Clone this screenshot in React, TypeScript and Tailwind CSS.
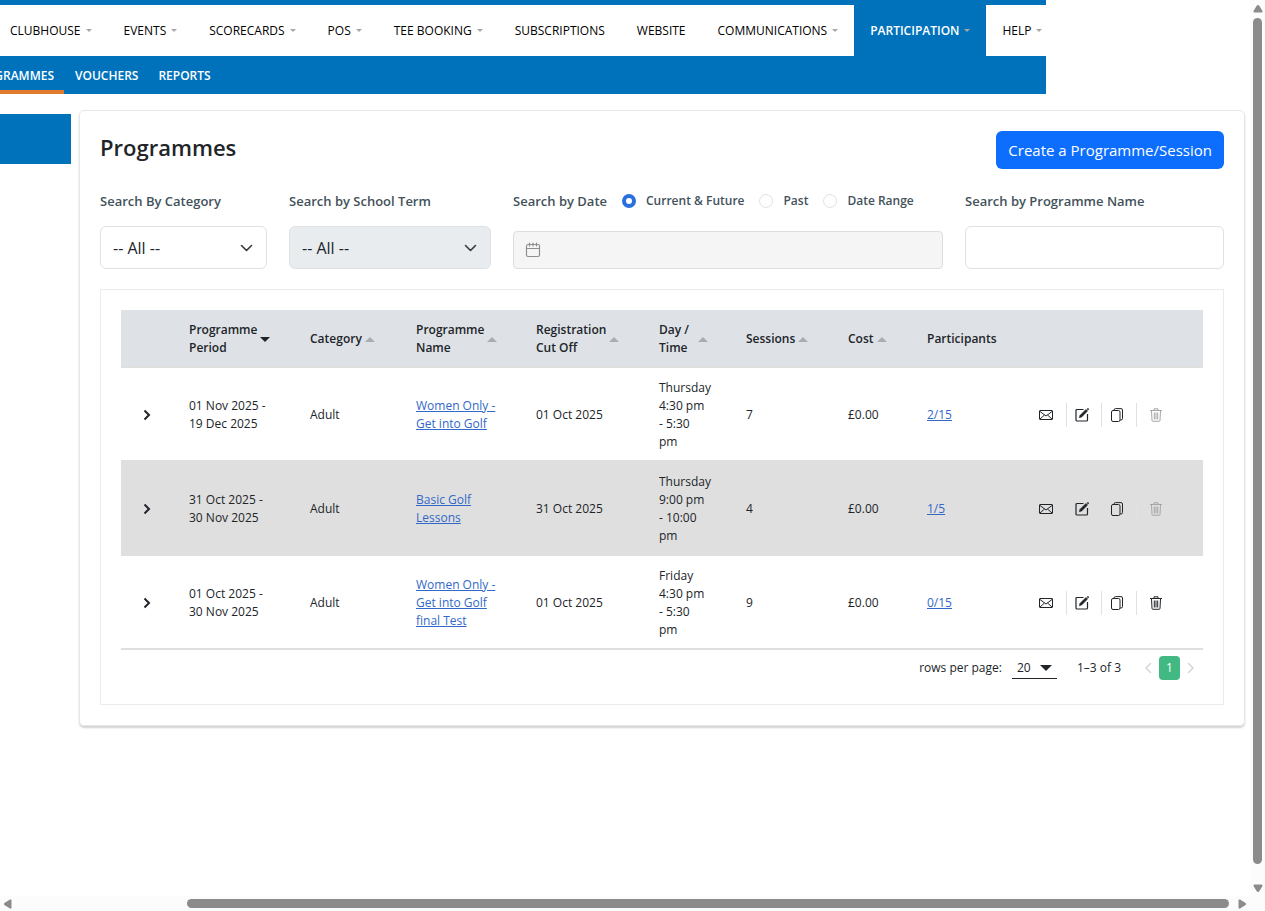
import { useState } from 'react';

const menu = [
  { label: 'CLUBHOUSE', caret: true },
  { label: 'EVENTS', caret: true },
  { label: 'SCORECARDS', caret: true },
  { label: 'POS', caret: true },
  { label: 'TEE BOOKING', caret: true },
  { label: 'SUBSCRIPTIONS', caret: false },
  { label: 'WEBSITE', caret: false },
  { label: 'COMMUNICATIONS', caret: true },
  { label: 'PARTICIPATION', caret: true, active: true },
  { label: 'HELP', caret: true }
];

const columns = [
  { label: 'Programme Period', width: 'w-[121px]', sort: 'desc' },
  { label: 'Category', width: 'w-[106px]', sort: 'none' },
  { label: 'Programme Name', width: 'w-[120px]', sort: 'none' },
  { label: 'Registration Cut\u00a0Off', width: 'w-[123px]', sort: 'none' },
  { label: 'Day\u00a0/ Time', width: 'w-[87px]', sort: 'none' },
  { label: 'Sessions', width: 'w-[102px]', sort: 'none' },
  { label: 'Cost', width: 'w-[79px]', sort: 'none' },
  { label: 'Participants', width: 'w-[110px]', sort: '' }
];

const programmes = [
  {
    period: '01 Nov 2025 - 19 Dec 2025',
    category: 'Adult',
    name: 'Women Only - Get into Golf',
    cutOff: '01 Oct 2025',
    day: 'Thursday',
    time: '4:30 pm - 5:30 pm',
    sessions: 7,
    cost: '£0.00',
    participants: '2/15',
    canDelete: false
  },
  {
    period: '31 Oct 2025 - 30 Nov 2025',
    category: 'Adult',
    name: 'Basic Golf Lessons',
    cutOff: '31 Oct 2025',
    day: 'Thursday',
    time: '9:00 pm - 10:00 pm',
    sessions: 4,
    cost: '£0.00',
    participants: '1/5',
    canDelete: false
  },
  {
    period: '01 Oct 2025 - 30 Nov 2025',
    category: 'Adult',
    name: 'Women Only - Get into Golf final Test',
    cutOff: '01 Oct 2025',
    day: 'Friday',
    time: '4:30 pm - 5:30 pm',
    sessions: 9,
    cost: '£0.00',
    participants: '0/15',
    canDelete: true
  }
];

const dateModes = ['Current & Future', 'Past', 'Date Range'];

function SelectChevron() {
  return (
    <svg viewBox="0 0 16 16" className="pointer-events-none absolute right-3 top-1/2 h-4 w-4 -translate-y-1/2" fill="none" stroke="#343a40" strokeWidth="1.6" strokeLinecap="round" strokeLinejoin="round">
      <path d="m2.500 5.500 5 5 5-5" />
    </svg>
  );
}

function MailIcon() {
  return (
    <svg viewBox="0 0 16 12" className="h-3 w-4" fill="none" stroke="currentColor" strokeLinejoin="round">
      <rect x="1.5" y="1.5" width="13" height="9" rx=".5" />
      <path d="M2 2.500 8 7l6-4.500M2 10l4.500-4M14 10 9.500 6" />
    </svg>
  );
}

function EditIcon() {
  return (
    <svg viewBox="0 0 14 14" className="h-3.5 w-3.5" fill="none" stroke="currentColor">
      <path d="M8.500 1.500H2A1 1 0 0 0 1 2.500V12a1 1 0 0 0 1 1h9.500a1 1 0 0 0 1-1V6" strokeWidth="1.200" />
      <path d="m4.300 9.700.8-2.400L11 1.400l1.600 1.600-5.900 5.900-2.400.8Z" fill="currentColor" strokeWidth=".6" />
      <path d="m12.400.4 1.200 1.200" strokeWidth="1.500" />
    </svg>
  );
}

function CopyIcon() {
  return (
    <svg viewBox="0 0 14 14" className="h-3.5 w-3.5" fill="none" stroke="currentColor">
      <rect x="1.500" y="2.500" width="8.500" height="11" rx="1.500" />
      <path d="M4 2.300V2A1.500 1.500 0 0 1 5.500.6H11A1.500 1.500 0 0 1 12.500 2v8.500A1.500 1.500 0 0 1 11 12h-.8" />
    </svg>
  );
}

function TrashIcon() {
  return (
    <svg viewBox="0 0 14 14" className="h-3.5 w-3.5" fill="none" stroke="currentColor">
      <path d="M1 2.500h12M5 2.300V.8h4v1.500" />
      <path d="M2.500 2.800 3 12.300a1 1 0 0 0 1 1h6a1 1 0 0 0 1-1l.5-9.500M5.300 4.500v7M7 4.500v7M8.700 4.500v7" />
    </svg>
  );
}

function CalendarIcon() {
  return (
    <svg viewBox="0 0 16 16" className="pointer-events-none absolute left-3 top-1/2 h-4 w-4 -translate-y-1/2" fill="none" stroke="#8f8f8f" strokeWidth="1.200" strokeLinecap="round">
      <rect x="1.500" y="2.500" width="13" height="12" rx="1.500" />
      <path d="M1.500 6.500h13M4.500 1v3M8 1v3M11.500 1v3" />
    </svg>
  );
}

function SortArrow({ sort }: { sort: string }) {
  if (sort === 'desc') {
    return (
      <svg viewBox="0 0 10 5" className="h-[5px] w-2.5 shrink-0" fill="#212529">
        <path d="M0 0h10L5 5Z" />
      </svg>
    );
  }
  return (
    <svg viewBox="0 0 10 5" className="h-[5px] w-2.5 shrink-0" fill="#a9adb1">
      <path d="M0 5h10L5 0Z" />
    </svg>
  );
}

export default function App() {
  const [category, setCategory] = useState('all');
  const [mode, setMode] = useState('Current & Future');
  const [search, setSearch] = useState('');

  return (
    <div className="grid h-screen grid-cols-[minmax(0,1fr)_15px] grid-rows-[minmax(0,1fr)_15px] overflow-hidden bg-white font-['Open_Sans','Noto_Sans',sans-serif] text-[12px] leading-[18px] text-[#212529]">
      <div className="overflow-hidden">
        {/* Header */}
        <header className="mr-[204px] border-t-[5px] border-[#0072bc]">
          <nav className="-ml-1.5 flex h-[51px]">
            {menu.map(item => (
              <button
                key={item.label}
                type="button"
                className={`flex shrink-0 items-center gap-[5px] whitespace-nowrap px-4 text-[12px] ${
                  item.active ? 'bg-[#0072bc] font-semibold text-white' : 'font-medium text-black'
                }`}
              >
                {item.label}
                {item.caret && (
                  <svg viewBox="0 0 6 3" className="h-[3px] w-1.5" fill="#a8a8a8">
                    <path d="M0 0h6L3 3Z" />
                  </svg>
                )}
              </button>
            ))}
          </nav>
          <nav className="flex h-[38px] bg-[#0072bc] text-[12px] font-semibold text-white">
            <div className="flex w-16 justify-end overflow-hidden border-b-4 border-[#e07b2e] pr-2.5">
              <a href="#programmes" className="pt-[11px]">PROGRAMMES</a>
            </div>
            <a href="#vouchers" className="ml-[11px] pt-[11px]">VOUCHERS</a>
            <a href="#reports" className="ml-5 pt-[11px]">REPORTS</a>
          </nav>
        </header>

        <div className="flex items-start gap-2 pr-[5px] pt-4">
          <aside className="mt-1 h-[50px] w-[71px] shrink-0 bg-[#0072bc]"></aside>

          <main className="min-w-0 flex-1 rounded-[5px] border border-[#e6e6e6] p-5 shadow-[0_2px_2px_rgba(0,0,0,0.18)]">
            <div className="flex items-start justify-between">
              <h1 className="text-[22px] font-semibold leading-8">Programmes</h1>
              <button type="button" className="h-[38px] rounded-md bg-[#0d6efd] px-3 text-[15px] leading-6 text-white">
                Create a Programme/Session
              </button>
            </div>

            {/* Filters */}
            <div className="mt-[22px] grid grid-cols-[167fr_202fr_430fr_259fr] gap-[22px] text-[13px] font-semibold text-[#43525a]">
              <div className="flex flex-col justify-between">
                <label htmlFor="category" className="leading-5">Search By Category</label>
                <div className="relative">
                  <select
                    id="category"
                    value={category}
                    onChange={e => setCategory(e.target.value)}
                    className="block h-[43px] w-full appearance-none rounded-md border border-[#dee2e6] bg-white px-3 text-[16px] font-normal text-[#212529]"
                  >
                    <option value="all">-- All --</option>
                    <option value="adult">Adult</option>
                  </select>
                  <SelectChevron />
                </div>
              </div>
              <div className="flex flex-col justify-between">
                <label htmlFor="term" className="leading-5">Search by School Term</label>
                <div className="relative">
                  <select
                    id="term"
                    disabled
                    className="block h-[43px] w-full appearance-none rounded-md border border-[#dee2e6] bg-[#e9ecef] px-3 text-[16px] font-normal text-[#212529] opacity-100"
                  >
                    <option>-- All --</option>
                  </select>
                  <SelectChevron />
                </div>
              </div>
              <div className="flex h-[78px] flex-col justify-between">
                <div className="flex items-center whitespace-nowrap leading-5">
                  <label htmlFor="dates">Search by Date</label>
                  {dateModes.map(m => (
                    <label key={m} className="ml-[15px] flex items-center gap-2.5 text-[12px]">
                      <input
                        type="radio"
                        name="dateMode"
                        checked={mode === m}
                        onChange={() => setMode(m)}
                        className="h-3.5 w-3.5 appearance-none rounded-full border border-[#dee2e6] bg-white checked:border-[4px] checked:border-[#2a6fe0]"
                      />
                      {m}
                    </label>
                  ))}
                </div>
                <div className="relative">
                  <input id="dates" type="text" disabled className="block h-[38px] w-full rounded border border-[#ddd] bg-[#f5f5f5] pl-9 pr-3" />
                  <CalendarIcon />
                </div>
              </div>
              <div className="flex flex-col justify-between">
                <label htmlFor="name" className="leading-5">Search by Programme Name</label>
                <input
                  id="name"
                  type="text"
                  value={search}
                  onChange={e => setSearch(e.target.value)}
                  className="block h-[43px] w-full rounded-md border border-[#dee2e6] px-3 text-[16px] font-normal"
                />
              </div>
            </div>

            {/* Programme list */}
            <section className="mt-5 border border-[#e9ecef] px-5 pb-6 pt-5">
              <table className="w-full table-fixed border-separate border-spacing-0 text-left">
                <thead className="bg-[#dee2e6]">
                  <tr>
                    <th className="w-[58px] border-b-2 border-[#dfdfdf]" aria-label="Expand"></th>
                    {columns.map(col => (
                      <th key={col.label} className={`h-[58px] border-b-2 border-[#dfdfdf] px-2.5 pb-0 pt-0.5 font-semibold ${col.width}`}>
                        <div className="flex items-center gap-[3px]">
                          <span className={col.label.includes(' ') ? 'w-min min-w-9' : ''}>{col.label}</span>
                          {col.sort && <SortArrow sort={col.sort} />}
                        </div>
                      </th>
                    ))}
                    <th className="border-b-2 border-[#dfdfdf]" aria-label="Actions"></th>
                  </tr>
                </thead>
                <tbody>
                  {programmes.map(p => (
                    <tr key={p.period} className="even:bg-[#dfdfdf] [&>td]:border-b-2 [&>td]:border-[#dfdfdf] [&>td]:px-2.5 [&>td]:pb-[9px] [&>td]:pt-[11px]">
                      <td>
                        <button type="button" aria-label="Show sessions" className="ml-2.5 flex h-4 w-3 items-center justify-center">
                          <svg viewBox="0 0 8 12" className="h-3 w-2" fill="none" stroke="#212529" strokeWidth="2">
                            <path d="m1.500 1.500 4.500 4.500-4.500 4.500" />
                          </svg>
                        </button>
                      </td>
                      <td>
                        <div className="w-[84px]">{p.period}</div>
                      </td>
                      <td>{p.category}</td>
                      <td>
                        <div className="w-[84px]">
                          <a href="#programme" className="text-[#3268c8] underline">{p.name}</a>
                        </div>
                      </td>
                      <td>{p.cutOff}</td>
                      <td>
                        <div className="w-12">
                          {p.day} {p.time}
                        </div>
                      </td>
                      <td>{p.sessions}</td>
                      <td>{p.cost}</td>
                      <td>
                        <a href="#participants" className="text-[#3268c8] underline">{p.participants}</a>
                      </td>
                      <td>
                        <div className="flex justify-end divide-x divide-[#dee2e6] pr-[21px] [&>button]:flex [&>button]:h-6 [&>button]:items-center">
                          <button type="button" aria-label="Email" className="pr-3"><MailIcon /></button>
                          <button type="button" aria-label="Edit" className="w-[35px] pl-2"><EditIcon /></button>
                          <button type="button" aria-label="Copy" className="w-[35px] pl-2"><CopyIcon /></button>
                          <button type="button" aria-label="Delete" disabled={!p.canDelete} className="w-[35px] pl-3 disabled:text-[#a6a6a6]"><TrashIcon /></button>
                        </div>
                      </td>
                    </tr>
                  ))}
                </tbody>
              </table>

              {/* Pagination */}
              <div className="flex items-center justify-end pr-[9px] pt-1.5">
                <label htmlFor="rows">rows per page:</label>
                <div className="relative ml-2.5 mr-5">
                  <select id="rows" className="block h-[22px] w-[45px] appearance-none border-b border-[#212529] bg-transparent pl-[5px]">
                    <option>20</option>
                    <option>50</option>
                  </select>
                  <svg viewBox="0 0 12 6" className="pointer-events-none absolute right-[5px] top-2 h-1.5 w-3" fill="#212529">
                    <path d="M0 0h12L6 6Z" />
                  </svg>
                </div>
                <span>1–3 of 3</span>
                <button type="button" aria-label="Previous page" disabled className="ml-6">
                  <svg viewBox="0 0 7 12" className="h-3 w-[7px]" fill="none" stroke="#d5d5d5" strokeWidth="1.500">
                    <path d="M6 1 1 6l5 5" />
                  </svg>
                </button>
                <button type="button" className="mx-[7px] h-6 w-[21px] rounded bg-[#42b883] text-white">1</button>
                <button type="button" aria-label="Next page" disabled>
                  <svg viewBox="0 0 7 12" className="h-3 w-[7px]" fill="none" stroke="#d5d5d5" strokeWidth="1.500">
                    <path d="m1 1 5 5-5 5" />
                  </svg>
                </button>
              </div>
            </section>
          </main>
        </div>
      </div>

      {/* Vertical scrollbar */}
      <div className="flex flex-col items-center justify-between bg-[#fcfcfc] pb-1 pt-[5px]">
        <svg viewBox="0 0 10 8" className="h-2 w-2.5 shrink-0" fill="#8b8b8b">
          <path d="M5 0q.8 0 1.300.8L9.500 6Q10 7.500 8.500 7.500h-7Q0 7.500.5 6L3.700.8Q4.200 0 5 0Z" />
        </svg>
        <div className="mb-5 mt-[5px] w-[9px] flex-1 rounded-full bg-[#8b8b8b]"></div>
        <svg viewBox="0 0 10 8" className="h-2 w-2.5 shrink-0" fill="#8b8b8b">
          <path d="M5 8q-.8 0-1.300-.8L.5 2Q0 .5 1.500.5h7Q10 .5 9.500 2L6.300 7.200Q5.800 8 5 8Z" />
        </svg>
      </div>

      {/* Horizontal scrollbar */}
      <div className="col-span-2 flex items-center bg-[#fcfcfc] pl-1 pr-[19px]">
        <svg viewBox="0 0 8 10" className="h-2.5 w-2 shrink-0" fill="#8b8b8b">
          <path d="M0 5q0-.8.800-1.300L6 .5Q7.500 0 7.500 1.500v7q0 1.500-1.500 1L.8 6.300Q0 5.800 0 5Z" />
        </svg>
        <div className="ml-[175px] mr-[9px] h-[9px] flex-1 rounded-full bg-[#8b8b8b]"></div>
        <svg viewBox="0 0 8 10" className="h-2.5 w-2 shrink-0" fill="#8b8b8b">
          <path d="M8 5q0-.8-.8-1.300L2 .5Q.5 0 .5 1.500v7q0 1.500 1.500 1l5.200-3.200Q8 5.800 8 5Z" />
        </svg>
      </div>
    </div>
  );
}
